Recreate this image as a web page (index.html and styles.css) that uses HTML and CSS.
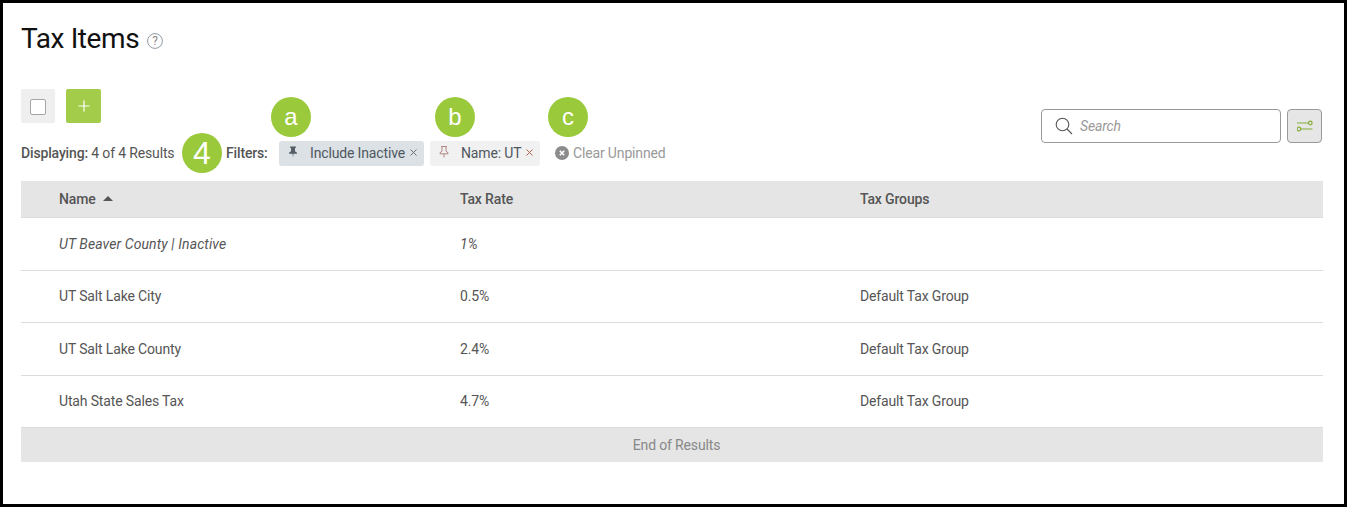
FILE: index.html
```html
<!DOCTYPE html>
<html>
<head>
<meta charset="utf-8">
<title>Tax Items</title>
<link rel="stylesheet" href="styles.css">
</head>
<body>
<div class="frame">
  <div class="title-row">
    <h1>Tax Items</h1>
    <svg class="help" width="16" height="16" viewBox="0 0 16 16"><circle cx="8" cy="8" r="7.400" fill="none" stroke="#8f9aa3" stroke-width="1"/><text x="8" y="12" text-anchor="middle" class="help-q">?</text></svg>
  </div>

  <div class="toolbar">
    <div class="left">
      <div class="buttons">
        <div class="check-btn"><span class="check"></span></div>
        <div class="add-btn">
          <svg width="12" height="12" viewBox="0 0 12 12"><path d="M6 .5v11M.5 6h11" stroke="#fff" stroke-width="1.200"/></svg>
        </div>
      </div>
      <div class="filters">
        <span class="displaying"><b>Displaying:</b> 4 of 4 Results</span>
        <span class="filters-label">Filters:</span>
        <span class="chip chip-pinned">
          <svg class="pin" width="10" height="12" viewBox="0 0 10 12"><path d="M2 .5h6v1L7 2v3.200l2 1.600v1H5.500L5 11.500 4.500 7.800H1v-1l2-1.600V2L2 1.500z" fill="#555e66"/></svg>
          <span class="chip-text">Include Inactive</span>
          <svg class="x" width="7" height="7" viewBox="0 0 7 7"><path d="M.5.5l6 6M6.500.5l-6 6" stroke="#6b7278" stroke-width="1"/></svg>
        </span>
        <span class="chip chip-plain">
          <svg class="pin" width="10" height="12" viewBox="0 0 10 12"><path d="M2 .5h6M3 .5v4.700L1 6.800v1h8v-1L7 5.200V.5M5 7.800v3.700" fill="none" stroke="#b08a84" stroke-width="1"/></svg>
          <span class="chip-text">Name: UT</span>
          <svg class="x" width="7" height="7" viewBox="0 0 7 7"><path d="M.5.5l6 6M6.500.5l-6 6" stroke="#b5604f" stroke-width="1"/></svg>
        </span>
        <span class="clear">
          <svg width="14" height="14" viewBox="0 0 14 14"><circle cx="7" cy="7" r="7" fill="#8c8c8c"/><path d="M4.800 4.800l4.400 4.400M9.200 4.800l-4.400 4.400" stroke="#fff" stroke-width="1.600"/></svg>
          Clear Unpinned
        </span>
      </div>
    </div>
    <div class="right">
      <div class="search">
        <svg width="18" height="18" viewBox="0 0 18 18"><circle cx="7.500" cy="7.500" r="6.300" fill="none" stroke="#555" stroke-width="1.100"/><path d="M12 12l5 5" stroke="#555" stroke-width="1.100"/></svg>
        <span>Search</span>
      </div>
      <div class="settings-btn">
        <svg width="16" height="12" viewBox="0 0 16 12"><path d="M0 3h11.500M3.500 9h12" stroke="#86ad38" stroke-width="1.200"/><circle cx="13.300" cy="3" r="1.800" fill="none" stroke="#86ad38" stroke-width="1.200"/><circle cx="2" cy="9" r="1.800" fill="none" stroke="#86ad38" stroke-width="1.200"/></svg>
      </div>
    </div>
  </div>

  <div class="grid">
    <div class="row head">
      <div>Name <svg class="sort" width="10" height="5" viewBox="0 0 10 5"><path d="M5 0l5 5H0z" fill="#555"/></svg></div>
      <div>Tax Rate</div>
      <div>Tax Groups</div>
    </div>
    <div class="row inactive">
      <div>UT Beaver County | Inactive</div>
      <div>1%</div>
      <div></div>
    </div>
    <div class="row">
      <div>UT Salt Lake City</div>
      <div>0.5%</div>
      <div>Default Tax Group</div>
    </div>
    <div class="row">
      <div>UT Salt Lake County</div>
      <div>2.4%</div>
      <div>Default Tax Group</div>
    </div>
    <div class="row">
      <div>Utah State Sales Tax</div>
      <div>4.7%</div>
      <div>Default Tax Group</div>
    </div>
    <div class="end">End of Results</div>
  </div>

  <!-- callouts sit on top of the page -->
  <span class="callout c-4">4</span>
  <span class="callout c-a">a</span>
  <span class="callout c-b">b</span>
  <span class="callout c-c">c</span>
</div>
</body>
</html>
```

FILE: styles.css
```css
html, body
{
  margin: 0;
  padding: 0;
  background: #fff;
}
.frame
{
  position: relative;
  box-sizing: border-box;
  width: 1347px;
  height: 507px;
  border: 3px solid #000;
  padding: 0 22px 0 18px;
  font-family: Roboto, "Liberation Sans", sans-serif;
  font-size: 14px;
  letter-spacing: -.15px;
  color: #555;
  overflow: hidden;
}
.title-row
{
  display: flex;
  align-items: center;
  height: 36px;
  margin-top: 17px;
}
h1
{
  margin: 1px 0 0;
  font-size: 28px;
  letter-spacing: -.4px;
  font-weight: 400;
  color: #111;
}
.help
{
  margin: 6px 0 0 8px;
}
.help-q
{
  font-size: 12px;
  fill: #8a8a8a;
}

.toolbar
{
  display: flex;
  justify-content: space-between;
  margin-top: 33px;
}
.buttons
{
  display: flex;
  gap: 11px;
}
.check-btn
{
  display: flex;
  align-items: center;
  justify-content: center;
  width: 34px;
  height: 34px;
  background: #efefef;
  border-radius: 2px;
}
.check
{
  box-sizing: border-box;
  width: 16px;
  height: 16px;
  margin-top: 2px;
  background: #fff;
  border: 1px solid #a5a5a5;
  border-radius: 2px;
}
.add-btn
{
  display: flex;
  align-items: center;
  justify-content: center;
  width: 35px;
  height: 34px;
  background: #a2cc4a;
  border-radius: 2px;
}
.filters
{
  display: flex;
  align-items: center;
  height: 25px;
  margin-top: 18px;
  white-space: nowrap;
}
.displaying
{
  width: 205px;
  padding-bottom: 1px;
}
.displaying b, .filters-label
{
  font-weight: 500;
}
.filters-label
{
  width: 53px;
  padding-bottom: 1px;
}
.chip
{
  display: flex;
  align-items: center;
  height: 25px;
  padding-bottom: 1px;
  box-sizing: border-box;
  border-radius: 3px;
  color: #4f5760;
}
.chip-pinned
{
  width: 145px;
  background: #dbe1e5;
  margin-right: 6px;
}
.chip-plain
{
  width: 110px;
  background: #f1f1f1;
  margin-right: 15px;
}
.pin
{
  margin-left: 9px;
  margin-top: -3px;
}
.chip-text
{
  margin-left: 12px;
}
.x
{
  margin-left: 5px;
  margin-top: -1px;
}
.clear
{
  display: flex;
  align-items: center;
  gap: 4px;
  padding-bottom: 1px;
  color: #999;
}

.right
{
  display: flex;
  gap: 6px;
  margin-top: 20px;
}
.search
{
  box-sizing: border-box;
  display: flex;
  align-items: center;
  gap: 7px;
  width: 240px;
  height: 34px;
  padding-left: 13px;
  border: 1px solid #999;
  border-radius: 4px;
  font-style: italic;
  color: #999;
}
.settings-btn
{
  box-sizing: border-box;
  display: flex;
  align-items: center;
  justify-content: center;
  width: 35px;
  height: 34px;
  background: #e6e6e6;
  border: 1px solid #999;
  border-radius: 4px;
}

.grid
{
  margin: 15px -1px 0 0;
}
.row
{
  box-sizing: border-box;
  display: grid;
  grid-template-columns: 401px 400px 1fr;
  align-items: center;
  height: 52.400px;
  padding-left: 38px;
  border-bottom: 1px solid #dcdcdc;
}
.head
{
  height: 37.400px;
  padding-bottom: 1px;
  background: #e5e5e5;
  font-weight: 500;
}
.sort
{
  margin: 0 0 3px 4px;
}
.inactive
{
  font-style: italic;
  letter-spacing: .1px;
}
.end
{
  height: 34px;
  line-height: 34px;
  padding-left: 9px;
  text-align: center;
  background: #e5e5e5;
  color: #888;
}

.callout
{
  position: absolute;
  width: 40px;
  height: 40px;
  line-height: 40px;
  border-radius: 50%;
  background: #9aca3c;
  color: #fff;
  text-align: center;
  font-family: "Liberation Sans", sans-serif;
  font-size: 24px;
  letter-spacing: 0;
}
.c-4 { left: 179px; top: 130px; font-size: 32px; }
.c-a { left: 268px; top: 94px; }
.c-b { left: 432px; top: 94px; }
.c-c { left: 545px; top: 94px; }
```
